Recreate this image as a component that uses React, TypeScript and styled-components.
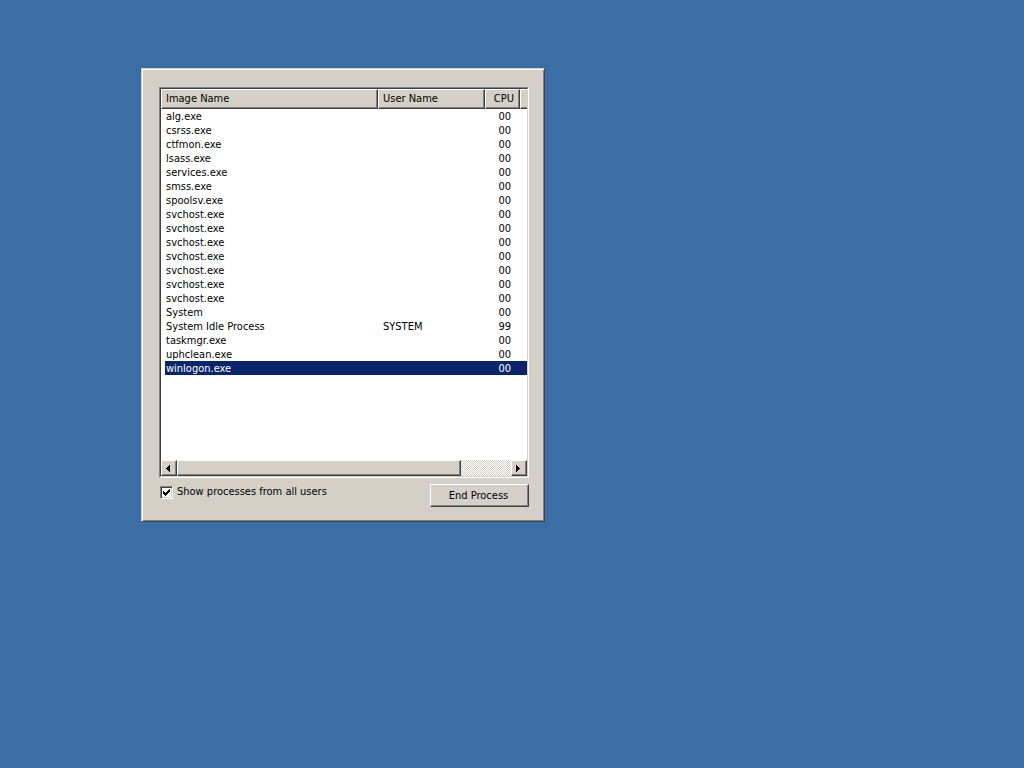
import React, { useState } from "react";
import styled, { createGlobalStyle, css } from "styled-components";

const GlobalStyle = createGlobalStyle`
  * { box-sizing: border-box; }
  body {
    margin: 0;
    background: #3a6ea5;
    color: #000;
    font: 11px/14px "DejaVu Sans Condensed", "DejaVu Sans", sans-serif;
  }
  button, input { font: inherit; color: inherit; }
`;

const raised = css`
  background: #d4d0c8;
  border: 1px solid;
  border-color: #fff #404040 #404040 #fff;
  box-shadow: inset -1px -1px #808080;
`;

const Desktop = styled.main`
  min-height: 100vh;
  padding: 68px 141px;
`;

const Panel = styled.section`
  max-width: 404px;
  padding: 18px 15px 14px 17px;
  background: #d4d0c8;
  border: 1px solid;
  border-color: #d4d0c8 #404040 #404040 #d4d0c8;
  box-shadow: inset 1px 1px #fff, inset -1px -1px #808080;
`;

const ListFrame = styled.div`
  border: 1px solid;
  border-color: #808080 #fff #fff #808080;
`;

const ListView = styled.div`
  display: flex;
  flex-direction: column;
  min-height: 389px;
  overflow: hidden;
  background: #fff;
  border: 1px solid;
  border-color: #404040 #d4d0c8 #d4d0c8 #404040;
`;

const TableArea = styled.div`
  flex: 1;
`;

const Table = styled.table`
  width: 100%;
  table-layout: fixed;
  border-collapse: separate;
  border-spacing: 0;
`;

const Col = styled.col<{ $width?: number }>`
  width: ${(p) => (p.$width ? `${p.$width}px` : "auto")};
`;

const HeadCell = styled.th<{ $right?: boolean }>`
  ${raised}
  height: 20px;
  padding: 0 5px 0 4px;
  font-weight: normal;
  text-align: ${(p) => (p.$right ? "right" : "left")};
`;

const HeadFiller = styled.td`
  ${raised}
  padding: 0;
  border-right: 0;
  box-shadow: inset 0 -1px #808080;
`;

const Cell = styled.td<{ $right?: boolean }>`
  height: 14px;
  padding: 2px 9px 0 5px;
  line-height: 12px;
  white-space: nowrap;
  text-align: ${(p) => (p.$right ? "right" : "left")};
  &:first-child {
    padding-left: 1px;
    border-left: 4px solid #fff;
  }
`;

const Row = styled.tr<{ $selected: boolean }>`
  background: ${(p) => (p.$selected ? "#0a246a" : "#fff")};
  color: ${(p) => (p.$selected ? "#fff" : "#000")};
  cursor: default;
`;

const ScrollBar = styled.div`
  display: flex;
  height: 16px;
  background: repeating-conic-gradient(#d4d0c8 0% 25%, #fff 0% 50%) 0 0 / 2px 2px;
`;

const ArrowButton = styled.button`
  ${raised}
  display: flex;
  align-items: center;
  justify-content: center;
  width: 16px;
  padding: 0 2px 0 0;
`;

const Track = styled.div`
  flex: 1;
`;

const Thumb = styled.div`
  ${raised}
  width: 85%;
  height: 100%;
`;

const Footer = styled.div`
  display: flex;
  align-items: flex-start;
  justify-content: space-between;
  padding-top: 6px;
`;

const CheckLabel = styled.label`
  display: flex;
  align-items: center;
  gap: 4px;
  padding: 1px;
`;

const CheckBox = styled.input`
  appearance: none;
  width: 13px;
  height: 13px;
  margin: 0;
  background: #fff;
  border: 1px solid;
  border-color: #808080 #fff #fff #808080;
  box-shadow: inset 1px 1px #404040, inset -1px -1px #d4d0c8;
  &:checked {
    background: #fff
      url("data:image/svg+xml,%3Csvg xmlns='http://www.w3.org/2000/svg' viewBox='0 0 11 11' shape-rendering='crispEdges'%3E%3Cpath d='M2 4h1v1h1v1h1v-1h1v-1h1v-1h1v-1h1v3h-1v1h-1v1h-1v1h-1v1h-1v-1h-1v-1h-1z'/%3E%3C/svg%3E")
      center / 11px 11px no-repeat;
  }
`;

const PushButton = styled.button`
  ${raised}
  width: 99px;
  height: 23px;
  padding: 0 2px 0 0;
`;

const processes = [
  "alg.exe", "csrss.exe", "ctfmon.exe", "lsass.exe", "services.exe", "smss.exe", "spoolsv.exe",
  "svchost.exe", "svchost.exe", "svchost.exe", "svchost.exe", "svchost.exe", "svchost.exe", "svchost.exe",
  "System", "System Idle Process", "taskmgr.exe", "uphclean.exe", "winlogon.exe",
].map((name) => {
  const idle = name === "System Idle Process";
  return { name, user: idle ? "SYSTEM" : "", cpu: idle ? "99" : "00" };
});

function Arrow({ left = false }: { left?: boolean }) {
  return (
    <svg width="4" height="7" viewBox="0 0 4 7" shapeRendering="crispEdges" aria-hidden="true">
      <path d={left ? "M4 0v7h-1v-1h-1v-1h-1v-1h-1v-1h1v-1h1v-1h1v-1z" : "M0 0v7h1v-1h1v-1h1v-1h1v-1h-1v-1h-1v-1h-1v-1z"} />
    </svg>
  );
}

export default function App() {
  const [selected, setSelected] = useState(processes.length - 1);
  return (
    <Desktop>
      <GlobalStyle />
      <Panel>
        <ListFrame>
          <ListView>
            <TableArea>
              <Table>
                <colgroup>
                  <Col />
                  <Col $width={107} />
                  <Col $width={35} />
                  <Col $width={7} />
                </colgroup>
                <thead>
                  <tr>
                    <HeadCell>Image Name</HeadCell>
                    <HeadCell>User Name</HeadCell>
                    <HeadCell $right>CPU</HeadCell>
                    <HeadFiller />
                  </tr>
                </thead>
                <tbody>
                  {processes.map((p, i) => (
                    <Row key={i} $selected={i === selected} onClick={() => setSelected(i)}>
                      <Cell>{p.name}</Cell>
                      <Cell>{p.user}</Cell>
                      <Cell $right>{p.cpu}</Cell>
                      <td />
                    </Row>
                  ))}
                </tbody>
              </Table>
            </TableArea>
            <ScrollBar>
              <ArrowButton type="button" aria-label="Scroll left"><Arrow left /></ArrowButton>
              <Track><Thumb /></Track>
              <ArrowButton type="button" aria-label="Scroll right"><Arrow /></ArrowButton>
            </ScrollBar>
          </ListView>
        </ListFrame>
        <Footer>
          <CheckLabel>
            <CheckBox type="checkbox" defaultChecked />
            Show processes from all users
          </CheckLabel>
          <PushButton type="button">End Process</PushButton>
        </Footer>
      </Panel>
    </Desktop>
  );
}
